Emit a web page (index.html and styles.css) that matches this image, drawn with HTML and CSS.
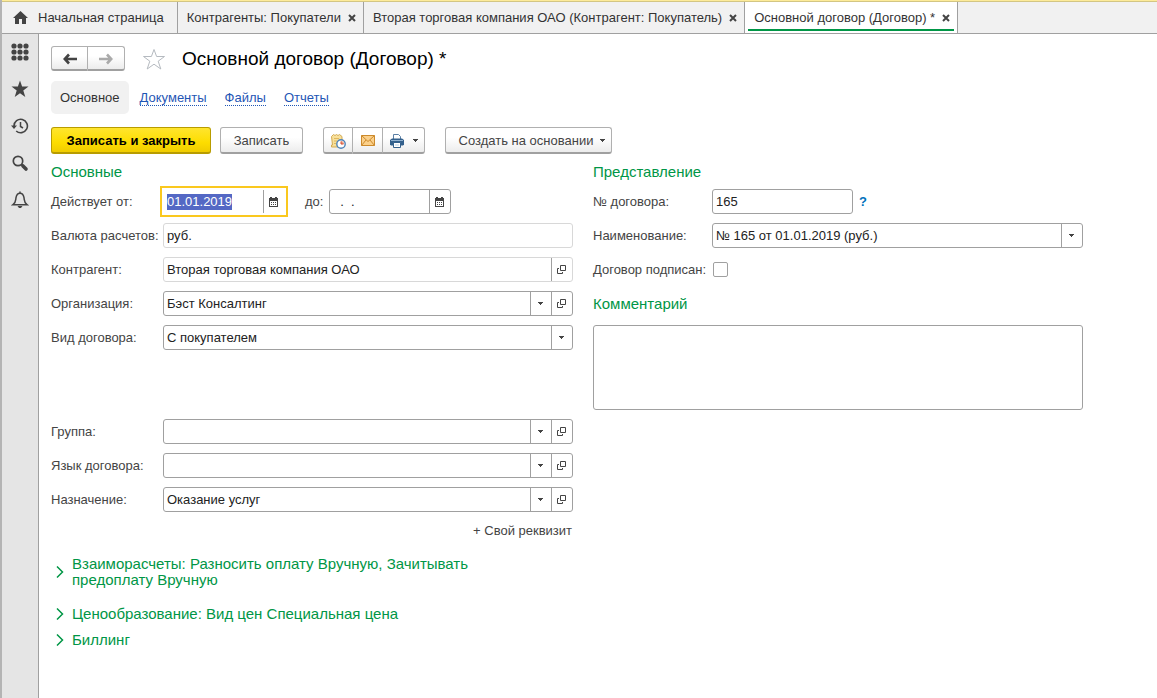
FILE: index.html
```html
<!DOCTYPE html>
<html lang="ru">
<head>
<meta charset="utf-8">
<title>Основной договор (Договор)</title>
<link rel="stylesheet" href="styles.css">
</head>
<body>
<svg class="sprite" aria-hidden="true">
  <symbol id="i-close" viewBox="0 0 8 8"><path d="M1 1l6 6M7 1L1 7" fill="none" stroke="#444" stroke-width="2"/></symbol>
  <symbol id="i-caret" viewBox="0 0 5 3"><path d="M0 0h5v1H4v1H3v1H2V2H1V1H0z" fill="#444"/></symbol>
  <symbol id="i-open" viewBox="0 0 9 9"><path d="M3.500.5h5v5h-5zM2 3.500H.5v5h5V7" fill="none" stroke="#444"/></symbol>
  <symbol id="i-cal" viewBox="0 0 9 10"><path d="M0 1h1V0h2v1h3V0h2v1h1v9H0z" fill="#444"/><path d="M1 4h7v5H1z" fill="#fff"/><path d="M2 5h1v1H2zM4 5h1v1H4zM6 5h1v1H6zM2 7h1v1H2zM4 7h1v1H4zM6 7h1v1H6z" fill="#444"/></symbol>
  <symbol id="i-chev" viewBox="0 0 8 12"><path d="M1 .5L6.500 6 1 11.500" fill="none" stroke="#009646" stroke-width="1.500"/></symbol>
</svg>
<header class="tabs">
  <div class="tab tab-home">
    <svg width="15" height="13" viewBox="0 0 15 13"><path d="M7.500 0L15 7h-2v6H9V8H6v5H2V7H0z" fill="#444"/></svg>
    <a href="#">Начальная страница</a>
  </div>
  <div class="tab"><a href="#">Контрагенты: Покупатели</a><button class="close" aria-label="Закрыть"><svg width="8" height="8"><use href="#i-close"/></svg></button></div>
  <div class="tab"><a href="#">Вторая торговая компания ОАО (Контрагент: Покупатель)</a><button class="close" aria-label="Закрыть"><svg width="8" height="8"><use href="#i-close"/></svg></button></div>
  <div class="tab tab-active"><a href="#">Основной договор (Договор) *</a><button class="close" aria-label="Закрыть"><svg width="8" height="8"><use href="#i-close"/></svg></button></div>
</header>
<div class="frame">
  <nav class="side">
    <button aria-label="Меню"><svg width="18" height="18" viewBox="0 0 18 18" fill="#444"><circle cx="3" cy="3" r="2.600"/><circle cx="9" cy="3" r="2.600"/><circle cx="15" cy="3" r="2.600"/><circle cx="3" cy="9" r="2.600"/><circle cx="9" cy="9" r="2.600"/><circle cx="15" cy="9" r="2.600"/><circle cx="3" cy="15" r="2.600"/><circle cx="9" cy="15" r="2.600"/><circle cx="15" cy="15" r="2.600"/></svg></button>
    <button aria-label="Избранное"><svg width="18" height="18" viewBox="0 0 18 18"><path d="M9 .5l2.100 6H17.500l-5.200 3.900L14.300 17 9 13.200 3.700 17l2-6.600L.5 6.500h6.400z" fill="#444"/></svg></button>
    <button aria-label="История"><svg width="18" height="18" viewBox="0 0 18 18" fill="none" stroke="#444" stroke-width="1.600"><path d="M3 9a6.700 6.700 0 1 1 2.200 5"/><path d="M9.500 5v4.500l2.500 1.500" stroke-width="1.500"/><path d="M0 8.500h6L3 12z" fill="#444" stroke="none"/></svg></button>
    <button aria-label="Поиск"><svg width="18" height="18" viewBox="0 0 18 18" fill="none" stroke="#444"><circle cx="7" cy="7" r="4.700" stroke-width="1.700"/><path d="M10.500 10.500L12 12" stroke-width="2"/><path d="M12 12l3 3" stroke-width="3.600" stroke-linecap="round"/></svg></button>
    <button aria-label="Уведомления"><svg width="18" height="18" viewBox="0 0 18 18" fill="none" stroke="#444" stroke-width="1.500"><path d="M9 .5V2M2 13.700h14c-3-2-2.500-4-3-7C12.500 3.500 11 2.200 9 2.200S5.500 3.500 5 6.700c-.5 3 0 5-3 7z"/><path d="M6.500 15h5L10 17H8z" fill="#444" stroke="none"/></svg></button>
  </nav>
  <main class="page">
    <div class="titlebar">
      <div class="group">
        <button class="btn nav-btn" aria-label="Назад"><svg width="14" height="12" viewBox="0 0 14 12"><path d="M6 1.500L1.800 6 6 10.500M2 6h12" fill="none" stroke="#444" stroke-width="2.600"/></svg></button>
        <button class="btn nav-btn" aria-label="Вперед"><svg width="14" height="12" viewBox="0 0 14 12"><path d="M8 1.500L12.200 6 8 10.500M12 6H0" fill="none" stroke="#aaa" stroke-width="2.600"/></svg></button>
      </div>
      <button class="plain" aria-label="В избранное"><svg width="24" height="22" viewBox="0 0 24 22"><path d="M12 1.500l2.600 7h7.900l-6.300 4.700 2.600 7.800-6.800-4.800L5.200 21l2.600-7.800L1.500 8.500h7.900z" fill="#fff" stroke="#b5bac0"/></svg></button>
      <h1>Основной договор (Договор) *</h1>
    </div>
    <nav class="subnav">
      <a class="current" href="#">Основное</a>
      <a href="#"><span>Документы</span></a>
      <a href="#"><span>Файлы</span></a>
      <a href="#"><span>Отчеты</span></a>
    </nav>
    <div class="toolbar">
      <button class="btn primary">Записать и закрыть</button>
      <button class="btn save">Записать</button>
      <div class="group">
        <button class="btn tool" aria-label="Напоминание"><svg width="16" height="16" viewBox="0 0 16 16"><path d="M1.500 3.500l2-2 1.500 1 1.500-1 1.500 1 1.500-1 2.500 2v9.500l-1 1h-9.500v-2h1z" fill="#f8e09a" stroke="#d3ab55"/><path d="M4 5.500h5M4 8h3M4 10.500h2" stroke="#dfb860"/><circle cx="11" cy="11" r="4.200" fill="#fff" stroke="#4f83b8" stroke-width="1.400"/><path d="M11 11V8a3 3 0 0 1 3 3z" fill="#f0a58c"/><path d="M11 8.500V11h2.500" fill="none" stroke="#d2482e"/></svg></button>
        <button class="btn tool" aria-label="Письмо"><svg width="14" height="11" viewBox="0 0 14 11"><path d="M.5.5h13v10H.5z" fill="#fbd08a" stroke="#cc8a2c"/><path d="M.5.5L7 6.500 13.500.5M.5 10.500L5 5M13.500 10.500L9 5" fill="none" stroke="#cc8a2c"/></svg></button>
        <button class="btn tool print" aria-label="Печать"><svg width="14" height="14" viewBox="0 0 14 14"><path d="M3.500 5V.5h5l2 2V5" fill="#fff" stroke="#5a7fa5"/><path d="M2 4.500h10l2 1.500v4.500l-1 1H1l-1-1V6z" fill="#33608c"/><path d="M1 6.500h12" stroke="#8fb0cf"/><path d="M3.500 8.500h7v5h-7z" fill="#fff" stroke="#33608c"/><path d="M5 11h4" stroke="#b5cde2"/></svg><svg width="5" height="3"><use href="#i-caret"/></svg></button>
      </div>
      <button class="btn create">Создать на основании<svg width="5" height="3"><use href="#i-caret"/></svg></button>
    </div>
    <form class="columns">
      <section class="left">
        <h2>Основные</h2>
        <div class="row">
          <label for="from">Действует от:</label>
          <div class="field date focused"><input id="from" type="text" value="01.01.2019" autofocus><button type="button" class="cell" aria-label="Календарь"><svg width="9" height="10"><use href="#i-cal"/></svg></button></div>
          <label class="to" for="to">до:</label>
          <div class="field date"><input id="to" type="text" value="&nbsp; .&nbsp; ."><button type="button" class="cell" aria-label="Календарь"><svg width="9" height="10"><use href="#i-cal"/></svg></button></div>
        </div>
        <div class="row"><label for="cur">Валюта расчетов:</label><div class="field soft"><input id="cur" type="text" value="руб." readonly></div></div>
        <div class="row"><label for="agent">Контрагент:</label><div class="field soft"><input id="agent" type="text" value="Вторая торговая компания ОАО" readonly><button type="button" class="cell" aria-label="Открыть"><svg width="9" height="9"><use href="#i-open"/></svg></button></div></div>
        <div class="row"><label for="org">Организация:</label><div class="field"><div class="pick"><select id="org"><option>Бэст Консалтинг</option></select><span class="cell"><svg width="5" height="3"><use href="#i-caret"/></svg></span></div><button type="button" class="cell" aria-label="Открыть"><svg width="9" height="9"><use href="#i-open"/></svg></button></div></div>
        <div class="row"><label for="kind">Вид договора:</label><div class="field"><div class="pick"><select id="kind"><option>С покупателем</option></select><span class="cell"><svg width="5" height="3"><use href="#i-caret"/></svg></span></div></div></div>
        <div class="row apart"><label for="grp">Группа:</label><div class="field"><div class="pick"><select id="grp"><option></option></select><span class="cell"><svg width="5" height="3"><use href="#i-caret"/></svg></span></div><button type="button" class="cell" aria-label="Открыть"><svg width="9" height="9"><use href="#i-open"/></svg></button></div></div>
        <div class="row"><label for="lang">Язык договора:</label><div class="field"><div class="pick"><select id="lang"><option></option></select><span class="cell"><svg width="5" height="3"><use href="#i-caret"/></svg></span></div><button type="button" class="cell" aria-label="Открыть"><svg width="9" height="9"><use href="#i-open"/></svg></button></div></div>
        <div class="row"><label for="use">Назначение:</label><div class="field"><div class="pick"><select id="use"><option>Оказание услуг</option></select><span class="cell"><svg width="5" height="3"><use href="#i-caret"/></svg></span></div><button type="button" class="cell" aria-label="Открыть"><svg width="9" height="9"><use href="#i-open"/></svg></button></div></div>
        <button type="button" class="plain add">+ Свой реквизит</button>
        <div class="folds">
          <button type="button" class="plain fold fold-long"><svg width="8" height="12"><use href="#i-chev"/></svg><span>Взаиморасчеты: Разносить оплату Вручную, Зачитывать предоплату Вручную</span></button>
          <button type="button" class="plain fold"><svg width="8" height="12"><use href="#i-chev"/></svg><span>Ценообразование: Вид цен Специальная цена</span></button>
          <button type="button" class="plain fold"><svg width="8" height="12"><use href="#i-chev"/></svg><span>Биллинг</span></button>
        </div>
      </section>
      <section class="right">
        <h2>Представление</h2>
        <div class="row"><label for="num">№ договора:</label><div class="field number"><input id="num" type="text" value="165"></div><a class="help" href="#">?</a></div>
        <div class="row"><label for="name">Наименование:</label><div class="field"><input id="name" type="text" value="№ 165 от 01.01.2019 (руб.)"><button type="button" class="cell" aria-label="Выбрать"><svg width="5" height="3"><use href="#i-caret"/></svg></button></div></div>
        <div class="row"><label for="signed">Договор подписан:</label><input id="signed" class="check" type="checkbox"></div>
        <h2 class="note-title" id="note-title">Комментарий</h2>
        <textarea class="note" aria-labelledby="note-title"></textarea>
      </section>
    </form>
  </main>
</div>
<script src="script.js"></script>
</body>
</html>
```
FILE: styles.css
```css
* { box-sizing: border-box; }
body {
  margin: 0;
  min-height: 100vh;
  display: flex;
  flex-direction: column;
  background: #fff;
  border-left: 2px solid #b4b4b4;
  color: #444;
  font: 13px/16px "Liberation Sans", Arial, sans-serif;
}
button, input, select, textarea { font: inherit; color: inherit; margin: 0; }
button { padding: 0; cursor: pointer; }
svg { display: block; flex: none; }
a { color: inherit; text-decoration: none; }
.sprite { display: none; }

.tabs {
  display: flex;
  height: 34px;
  background: #f1f1f1;
  border-top: 1px solid #fdeb9a;
  border-bottom: 1px solid #a0a0a0;
  box-shadow: inset 0 1px #d3c683;
}
.tab {
  position: relative;
  display: flex;
  align-items: center;
  gap: 7px;
  margin-top: 1px;
  padding: 0 7px 0 9px;
  border-right: 1px solid #a0a0a0;
  white-space: nowrap;
  color: #333;
}
.tab-home { padding: 0 13px 0 11px; gap: 10px; }
.tab-active { background: #fff; }
.tab-active::after {
  content: "";
  position: absolute;
  left: 3px;
  right: 3px;
  bottom: 2px;
  height: 2px;
  background: #009646;
}
.close { border: 0; background: none; }

.frame { flex: 1; display: flex; }
.side {
  width: 37px;
  flex: none;
  display: flex;
  flex-direction: column;
  align-items: center;
  gap: 19px;
  padding-top: 9px;
  background: #e5e5e5;
  border-right: 1px solid #a0a0a0;
}
.side button { border: 0; background: none; }

.page { flex: 1; min-width: 0; padding: 12px 74px 20px 12px; }
.titlebar { display: flex; align-items: center; height: 25px; }
.titlebar .plain { margin: 0 16px 0 17px; }
h1 { margin: 0; font-size: 19px; line-height: 24px; font-weight: 400; color: #000; white-space: nowrap; }

.btn {
  height: 27px;
  display: flex;
  align-items: center;
  justify-content: center;
  padding-top: 1px;
  border: 1px solid #b0b0b0;
  border-bottom: 2px solid #a0a0a0;
  border-radius: 3px;
  background: linear-gradient(#fff 40%, #ececec);
  white-space: nowrap;
}
.group { display: flex; }
.group .btn { border-radius: 0; }
.group .btn + .btn { border-left: 0; }
.group .btn:first-child { border-radius: 3px 0 0 3px; }
.group .btn:last-child { border-radius: 0 3px 3px 0; }
.nav-btn { width: 37px; height: 25px; }
.plain { border: 0; background: none; }

.subnav { display: flex; align-items: center; height: 33px; margin-top: 10px; color: #1f56b5; }
.subnav a { padding-top: 1px; margin-right: 18px; }
.subnav span { border-bottom: 1px dotted #1f56b5; }
.subnav .current {
  margin-right: 11px;
  padding: 9px 9px 8px;
  border-radius: 5px;
  background: #f1f1f1;
  color: #333;
}

.toolbar { display: flex; margin-top: 13px; }
.primary {
  width: 160px;
  border-color: #b89c00;
  background: linear-gradient(#ffe52e, #fddd00 60%, #f0cc00);
  color: #000;
  font-weight: 700;
}
.save { width: 83px; margin: 0 20px 0 9px; }
.tool { width: 30px; }
.print { width: 42px; gap: 9px; }
.create { width: 167px; margin-left: 20px; padding-left: 7px; gap: 7px; }

.columns { display: grid; grid-template-columns: 522fr 490fr; gap: 20px; margin-top: 8px; }
.left, .right { display: flex; flex-direction: column; gap: 9px; min-width: 0; }
h2 { margin: 0; font-size: 15px; line-height: 20px; font-weight: 400; color: #009646; }
.columns h2 { margin-bottom: -2px; }
.columns .note-title { margin-top: 3px; }
.row { display: flex; align-items: center; height: 25px; }
.row label { flex: none; width: 112px; white-space: nowrap; }
.right .row label { width: 119px; }
.row .to { width: 24px; margin-left: 20px; }
.apart { margin-top: 60px; }

.field {
  flex: 1;
  min-width: 0;
  height: 25px;
  display: flex;
  border: 1px solid #a0a0a0;
  border-radius: 3px;
  background: #fff;
  color: #222;
}
.soft { border-color: #d8d8d8; }
.date { flex: none; width: 122px; }
.number { flex: none; width: 141px; }
.focused { border-color: #fff; outline: 2px solid #fac81e; outline-offset: 1px; border-radius: 0; }
.field input, .field select {
  flex: 1;
  min-width: 0;
  width: 100%;
  border: 0;
  outline: 0;
  padding: 0 3px;
  background: none;
  appearance: none;
}
.field input::selection { background: #5468c4; color: #fff; }
.cell {
  width: 21px;
  flex: none;
  display: flex;
  align-items: center;
  justify-content: center;
  padding-right: 2px;
  border: 0;
  border-left: 1px solid #a0a0a0;
  background: none;
}
.pick { flex: 1; min-width: 0; display: grid; }
.pick > * { grid-area: 1 / 1; }
.pick .cell { justify-self: end; pointer-events: none; }

.help { margin-left: 6px; color: #0071bc; font-weight: 700; }
.right .row .check {
  appearance: none;
  width: 15px;
  height: 15px;
  margin-left: 1px;
  border: 1px solid #a0a0a0;
  border-radius: 2px;
}
.note { height: 85px; width: 100%; margin-top: 4px; border: 1px solid #a0a0a0; border-radius: 3px; resize: none; display: block; }

.add { align-self: flex-end; margin: 2px 1px 0 0; }
.folds { display: flex; flex-direction: column; gap: 10px; margin: 8px 0 0 5px; }
.fold {
  display: flex;
  align-items: center;
  gap: 8px;
  max-width: 430px;
  text-align: left;
  font-size: 15px;
  line-height: 16px;
  color: #009646;
}
.fold-long { margin-bottom: 8px; }
```
FILE: script.js
```js
const from = document.getElementById("from");
from.focus();
from.select();
```
